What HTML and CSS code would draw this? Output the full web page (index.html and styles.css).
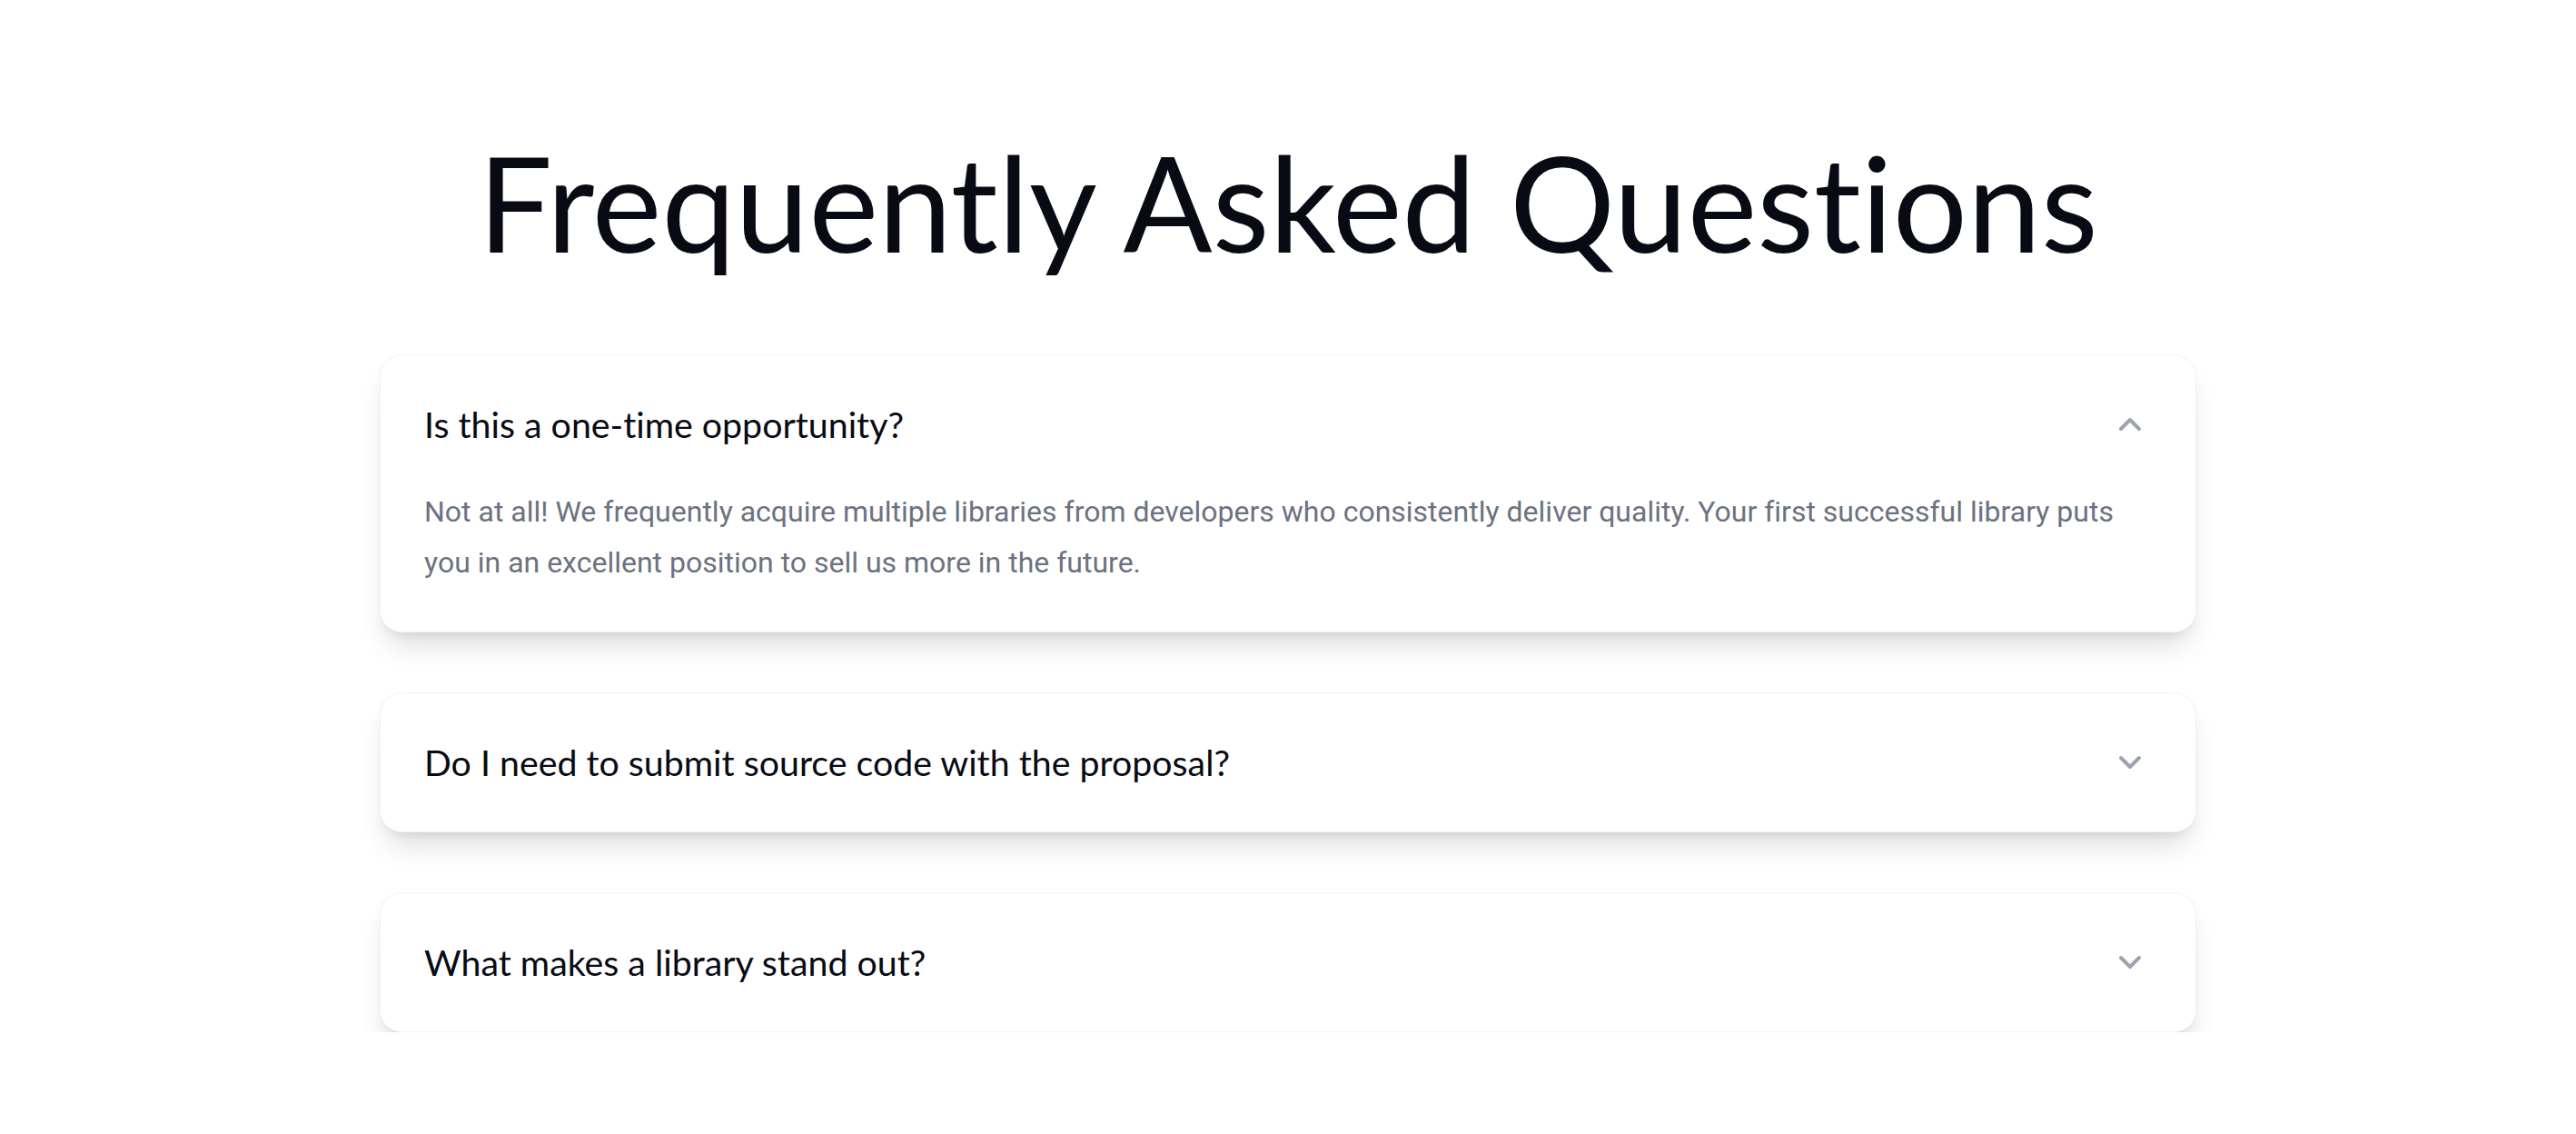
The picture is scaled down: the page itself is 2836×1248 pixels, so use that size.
FILE: index.html
```html
<!DOCTYPE html>
<html lang="en">
<head>
<meta charset="utf-8">
<title>FAQ</title>
<link rel="stylesheet" href="styles.css">
</head>
<body>
<section class="faq">
  <h1 class="faq-title">Frequently Asked Questions</h1>
  <div class="faq-list">
    <div class="faq-item">
      <div class="faq-q">
        <span>Is this a one-time opportunity?</span>
        <svg class="chev" viewBox="0 0 24 24" fill="none" stroke="currentColor" stroke-width="2.4" stroke-linecap="round" stroke-linejoin="round"><path d="m18 15-6-6-6 6"/></svg>
      </div>
      <p class="faq-a">Not at all! We frequently acquire multiple libraries from developers who consistently deliver quality. Your first successful library puts you in an excellent position to sell us more in the future.</p>
    </div>
    <div class="faq-item">
      <div class="faq-q">
        <span>Do I need to submit source code with the proposal?</span>
        <svg class="chev" viewBox="0 0 24 24" fill="none" stroke="currentColor" stroke-width="2.4" stroke-linecap="round" stroke-linejoin="round"><path d="m6 9 6 6 6-6"/></svg>
      </div>
    </div>
    <div class="faq-item">
      <div class="faq-q">
        <span>What makes a library stand out?</span>
        <svg class="chev" viewBox="0 0 24 24" fill="none" stroke="currentColor" stroke-width="2.4" stroke-linecap="round" stroke-linejoin="round"><path d="m6 9 6 6 6-6"/></svg>
      </div>
    </div>
  </div>
</section>
</body>
</html>
```

FILE: styles.css
```css
* { box-sizing: border-box; }
html, body { margin: 0; padding: 0; background: #ffffff; }
body {
  font-family: Lato, "Noto Sans", sans-serif;
  font-variant-ligatures: none;
  font-feature-settings: "liga" 0, "clig" 0;
}

.faq {
  width: 2000px;
  margin: 0 auto;
  padding-top: 150px;
}

.faq-title {
  margin: 0 0 95px;
  font-family: Lato, sans-serif;
  font-weight: 400;
  font-size: 145px;
  line-height: 1;
  text-align: center;
  color: #080b14;
}

.faq-list {
  display: flex;
  flex-direction: column;
  gap: 66px;
}

.faq-item {
  background: #ffffff;
  border: 1px solid #f1f2f4;
  border-radius: 24px;
  padding: 48px;
  box-shadow: 0 22px 32px -8px rgba(0, 0, 0, 0.13), 0 8px 14px -8px rgba(0, 0, 0, 0.12);
}

.faq-q {
  display: flex;
  align-items: center;
  justify-content: space-between;
  height: 56px;
  font-family: Lato, sans-serif;
  font-size: 39.3px;
  line-height: 56px;
  color: #080b14;
}

.chev {
  width: 40px;
  height: 40px;
  margin-right: 4px;
  color: #9ca3af;
  flex: none;
}

.faq-a {
  margin: 40px 0 0;
  font-family: Roboto, sans-serif;
  font-size: 32px;
  line-height: 56px;
  color: #6b7280;
}
```
